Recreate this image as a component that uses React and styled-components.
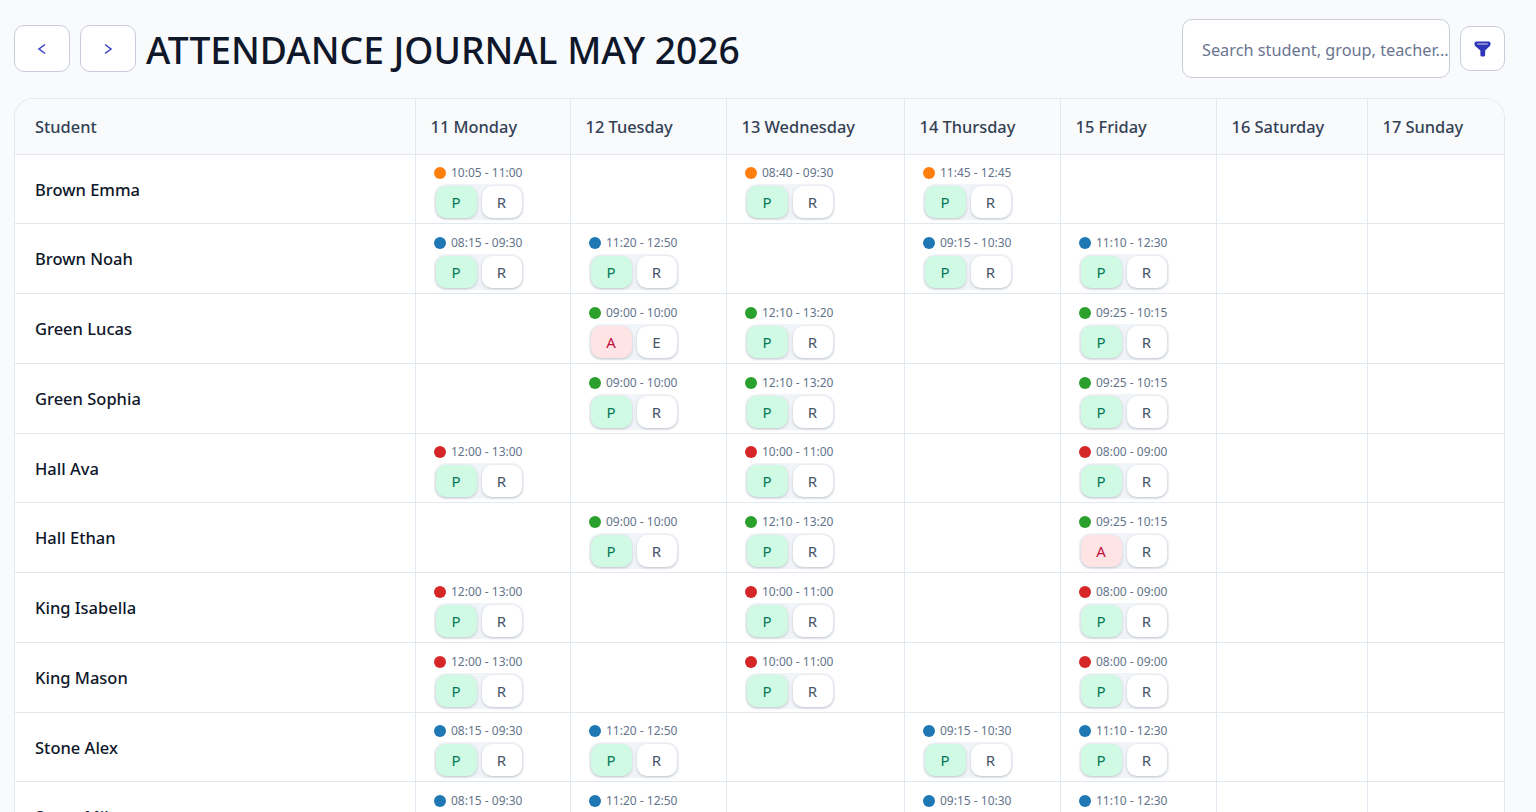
import React from 'react'
import styled, { createGlobalStyle } from 'styled-components'

const GlobalStyle = createGlobalStyle`
  html, body {
    margin: 0;
    height: 812px;
    overflow: hidden;
    background: #f8fafc;
    font-family: "Noto Sans", "Open Sans", sans-serif;
  }
`

const Page = styled.div`
  padding: 19px 31px 0 14px;
`

const Toolbar = styled.div`
  display: flex;
  align-items: center;
  justify-content: space-between;
  height: 59px;
  margin-bottom: 20px;
`

const Left = styled.div`
  display: flex;
  align-items: center;
  gap: 10px;
`

const Right = styled.div`
  display: flex;
  align-items: center;
  gap: 10px;
`

const NavButton = styled.button`
  width: 56px;
  height: 47px;
  display: flex;
  align-items: center;
  justify-content: center;
  padding: 0;
  background: #fff;
  border: 1px solid #c9ccd9;
  border-radius: 10px;
  color: #3a3fc9;
`

const Title = styled.h1`
  margin: 2px 0 0;
  font-size: 37.2px;
  line-height: 48px;
  font-weight: 500;
  color: #0f172a;
  white-space: nowrap;
`

const Search = styled.input`
  box-sizing: border-box;
  width: 268px;
  height: 59px;
  padding: 2px 0 0 19px;
  background: #fff;
  border: 1px solid #c9ccd9;
  border-radius: 10px;
  font-family: inherit;
  font-size: 16.3px;
  color: #0f172a;
  text-overflow: ellipsis;
  outline: none;

  &::placeholder {
    color: #6b7590;
    opacity: 1;
  }
`

const FilterButton = styled.button`
  width: 45px;
  height: 45px;
  display: flex;
  align-items: center;
  justify-content: center;
  padding: 0;
  background: #fff;
  border: 1px solid #c9ccd9;
  border-radius: 10px;
`

const TableWrap = styled.div`
  border: 1px solid #e2e8f0;
  border-bottom: 0;
  border-radius: 20px 20px 0 0;
  overflow: hidden;
  background: #fff;
`

const Table = styled.table`
  width: 100%;
  table-layout: fixed;
  border-collapse: separate;
  border-spacing: 0;
`

const Head = styled.th`
  box-sizing: border-box;
  height: 55.65px;
  padding: 0 15px;
  background: #f8fafc;
  border-bottom: 1px solid #e2e8f0;
  border-left: ${p => (p.$first ? '0' : '1px solid #e2e8f0')};
  padding-left: ${p => (p.$first ? '20px' : '14.5px')};
  font-size: 16.4px;
  font-weight: 500;
  color: #334155;
  text-align: left;
  white-space: nowrap;
`

const Row = styled.tr`
  height: 69.75px;
`

const NameCell = styled.td`
  padding: 0 0 0 20px;
  border-bottom: 1px solid #e2e8f0;
  font-size: 16.5px;
  font-weight: 500;
  color: #0f172a;
  white-space: nowrap;
`

const DayCell = styled.td`
  box-sizing: border-box;
  padding: 10.75px 0 0 17.5px;
  vertical-align: top;
  border-bottom: 1px solid #e2e8f0;
  border-left: 1px solid #e2e8f0;
`

const Time = styled.div`
  display: flex;
  align-items: center;
  gap: 5.5px;
  height: 16px;
  font-size: 12px;
  line-height: 16px;
  color: #64748b;
  white-space: nowrap;
`

const Dot = styled.span`
  width: 12px;
  height: 12px;
  border-radius: 50%;
  background: ${p => p.$color};
`

const Marks = styled.div`
  display: inline-flex;
  gap: 5px;
  margin-top: 3px;
  padding: 2px;
  border-radius: 12px;
  background: #f1f5f9;
`

const Mark = styled.span`
  width: ${p => (p.$wide ? '41px' : '40px')};
  height: 32px;
  display: flex;
  align-items: center;
  justify-content: center;
  border-radius: 10px;
  font-size: 15px;
  font-weight: 400;
  background: ${p => (p.$tone === 'green' ? '#d1fae5' : p.$tone === 'red' ? '#ffe4e6' : '#fff')};
  color: ${p => (p.$tone === 'green' ? '#047857' : p.$tone === 'red' ? '#be123c' : '#475569')};
  box-shadow: 0 1px 3px rgba(15, 23, 42, 0.22);
`

const colors = {
  orange: '#ff7f0e',
  blue: '#1f77b4',
  green: '#2ca02c',
  red: '#d62728',
}

const days = [
  ['11 Monday', 155],
  ['12 Tuesday', 156],
  ['13 Wednesday', 178],
  ['14 Thursday', 156],
  ['15 Friday', 156],
  ['16 Saturday', 151],
  ['17 Sunday', 137],
]

const s = (color, time, first = 'P', second = 'R') => ({ color, time, first, second })

const blueRow = [s('blue', '08:15 - 09:30'), s('blue', '11:20 - 12:50'), null, s('blue', '09:15 - 10:30'), s('blue', '11:10 - 12:30')]
const redRow = [s('red', '12:00 - 13:00'), null, s('red', '10:00 - 11:00'), null, s('red', '08:00 - 09:00')]
const greenRow = [null, s('green', '09:00 - 10:00'), s('green', '12:10 - 13:20'), null, s('green', '09:25 - 10:15')]

const students = [
  ['Brown Emma', [s('orange', '10:05 - 11:00'), null, s('orange', '08:40 - 09:30'), s('orange', '11:45 - 12:45'), null]],
  ['Brown Noah', blueRow],
  ['Green Lucas', [null, s('green', '09:00 - 10:00', 'A', 'E'), s('green', '12:10 - 13:20'), null, s('green', '09:25 - 10:15')]],
  ['Green Sophia', greenRow],
  ['Hall Ava', redRow],
  ['Hall Ethan', [null, s('green', '09:00 - 10:00'), s('green', '12:10 - 13:20'), null, s('green', '09:25 - 10:15', 'A', 'R')]],
  ['King Isabella', redRow],
  ['King Mason', redRow],
  ['Stone Alex', blueRow],
  ['Stone Mila', blueRow],
]

function Session({ item }) {
  if (!item) return null
  return (
    <>
      <Time>
        <Dot $color={colors[item.color]} />
        {item.time}
      </Time>
      <Marks>
        <Mark $wide $tone={item.first === 'A' ? 'red' : 'green'}>{item.first}</Mark>
        <Mark>{item.second}</Mark>
      </Marks>
    </>
  )
}

export default function App() {
  return (
    <Page>
      <GlobalStyle />
      <Toolbar>
        <Left>
          <NavButton>
            <svg width="10" height="12" viewBox="0 0 10 12" fill="none" stroke="currentColor" strokeWidth="1.5">
              <path d="M8 1.500 2 6l6 4.500" />
            </svg>
          </NavButton>
          <NavButton>
            <svg width="10" height="12" viewBox="0 0 10 12" fill="none" stroke="currentColor" strokeWidth="1.5">
              <path d="M2 1.500 8 6l-6 4.500" />
            </svg>
          </NavButton>
          <Title>ATTENDANCE JOURNAL MAY 2026</Title>
        </Left>
        <Right>
          <Search placeholder="Search student, group, teacher..." />
          <FilterButton>
            <svg width="17" height="16" viewBox="0 0 16 16" preserveAspectRatio="none">
              <path fill="#2f35b8" d="M2 .5h12a1.500 1.500 0 0 1 1.500 1.500v1.500c0 .6-.2 1-.6 1.400L10.500 9.500V14a1.500 1.500 0 0 1-1.500 1.500H7.500A1.500 1.500 0 0 1 6 14V9.500L1.100 4.900C.7 4.500.5 4.100.5 3.500V2A1.500 1.500 0 0 1 2 .5Z" />
              <path stroke="#b9bce8" strokeWidth="1.200" d="M3 3h10" />
            </svg>
          </FilterButton>
        </Right>
      </Toolbar>
      <TableWrap>
        <Table>
          <colgroup>
            <col />
            {days.map(([label, width]) => (
              <col key={label} style={{ width }} />
            ))}
          </colgroup>
          <thead>
            <tr>
              <Head $first>Student</Head>
              {days.map(([label]) => (
                <Head key={label}>{label}</Head>
              ))}
            </tr>
          </thead>
          <tbody>
            {students.map(([name, cells]) => (
              <Row key={name}>
                <NameCell>{name}</NameCell>
                {cells.map((item, i) => (
                  <DayCell key={i}>
                    <Session item={item} />
                  </DayCell>
                ))}
                <DayCell />
                <DayCell />
              </Row>
            ))}
          </tbody>
        </Table>
      </TableWrap>
    </Page>
  )
}
